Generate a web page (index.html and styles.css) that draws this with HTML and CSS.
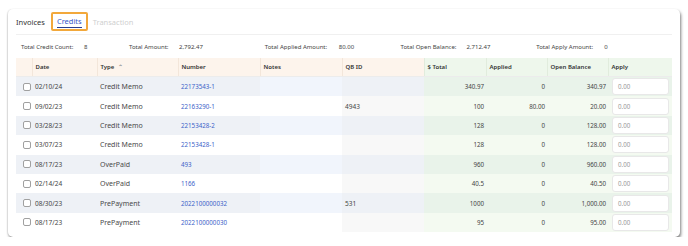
FILE: index.html
```html
<!DOCTYPE html>
<html lang="en">
  <head>
    <meta charset="UTF-8" />
    <meta name="viewport" content="width=device-width, initial-scale=1.0" />
    <title>Credits</title>
    <link rel="stylesheet" href="styles.css">
  </head>
  <body>
    <div class="card">
      <div class="tabs">
        <span class="tab">Invoices</span>
        <span class="tab active"><span class="tab-label">Credits</span></span>
        <span class="tab disabled">Transaction</span>
      </div>
      <div class="summary">
        <div class="stat"><span class="stat-label">Total Credit Count:</span><span class="stat-value">8</span></div>
        <div class="stat"><span class="stat-label">Total Amount:</span><span class="stat-value">2,792.47</span></div>
        <div class="stat"><span class="stat-label">Total Applied Amount:</span><span class="stat-value">80.00</span></div>
        <div class="stat"><span class="stat-label">Total Open Balance:</span><span class="stat-value">2,712.47</span></div>
        <div class="stat"><span class="stat-label">Total Apply Amount:</span><span class="stat-value">0</span></div>
      </div>
      <table class="grid">
        <colgroup>
          <col class="c-check" />
          <col class="c-date" />
          <col class="c-type" />
          <col class="c-num" />
          <col class="c-notes" />
          <col class="c-qb" />
          <col class="c-total" />
          <col class="c-applied" />
          <col class="c-open" />
          <col class="c-apply" />
        </colgroup>
        <thead>
          <tr>
            <th></th>
            <th>Date</th>
            <th>Type <span class="sort">&#8963;</span></th>
            <th>Number</th>
            <th>Notes</th>
            <th>QB ID</th>
            <th class="money">$ Total</th>
            <th class="money">Applied</th>
            <th class="money">Open Balance</th>
            <th class="money">Apply</th>
          </tr>
        </thead>
        <tbody>
          <tr>
            <td><span class="box"></span></td><td>02/10/24</td><td class="type">Credit Memo</td><td class="link">22173543-1</td><td class="notes"></td><td class="qb"></td>
            <td class="num money">340.97</td><td class="num money">0</td><td class="num money">340.97</td><td class="money"><div class="apply">0.00</div></td>
          </tr>
          <tr>
            <td><span class="box"></span></td><td>09/02/23</td><td class="type">Credit Memo</td><td class="link">22163290-1</td><td class="notes"></td><td class="qb">4943</td>
            <td class="num money">100</td><td class="num money">80.00</td><td class="num money">20.00</td><td class="money"><div class="apply">0.00</div></td>
          </tr>
          <tr>
            <td><span class="box"></span></td><td>03/28/23</td><td class="type">Credit Memo</td><td class="link">22153428-2</td><td class="notes"></td><td class="qb"></td>
            <td class="num money">128</td><td class="num money">0</td><td class="num money">128.00</td><td class="money"><div class="apply">0.00</div></td>
          </tr>
          <tr>
            <td><span class="box"></span></td><td>03/07/23</td><td class="type">Credit Memo</td><td class="link">22153428-1</td><td class="notes"></td><td class="qb"></td>
            <td class="num money">128</td><td class="num money">0</td><td class="num money">128.00</td><td class="money"><div class="apply">0.00</div></td>
          </tr>
          <tr>
            <td><span class="box"></span></td><td>08/17/23</td><td class="type">OverPaid</td><td class="link">493</td><td class="notes"></td><td class="qb"></td>
            <td class="num money">960</td><td class="num money">0</td><td class="num money">960.00</td><td class="money"><div class="apply">0.00</div></td>
          </tr>
          <tr>
            <td><span class="box"></span></td><td>02/14/24</td><td class="type">OverPaid</td><td class="link">1166</td><td class="notes"></td><td class="qb"></td>
            <td class="num money">40.5</td><td class="num money">0</td><td class="num money">40.50</td><td class="money"><div class="apply">0.00</div></td>
          </tr>
          <tr>
            <td><span class="box"></span></td><td>08/30/23</td><td class="type">PrePayment</td><td class="link">2022100000032</td><td class="notes"></td><td class="qb">531</td>
            <td class="num money">1000</td><td class="num money">0</td><td class="num money">1,000.00</td><td class="money"><div class="apply">0.00</div></td>
          </tr>
          <tr>
            <td><span class="box"></span></td><td>08/17/23</td><td class="type">PrePayment</td><td class="link">2022100000030</td><td class="notes"></td><td class="qb"></td>
            <td class="num money">95</td><td class="num money">0</td><td class="num money">95.00</td><td class="money"><div class="apply">0.00</div></td>
          </tr>
        </tbody>
      </table>
    </div>
  </body>
</html>
```

FILE: styles.css
```css
body {
  margin: 0;
  background: #fff;
  font-family: "Noto Sans", "Open Sans", sans-serif;
  color: #333;
}

.card {
  margin: 9px 0 0 8px;
  width: 672px;
  height: 228px;
  box-sizing: border-box;
  padding: 0 8px;
  background: #fff;
  border-radius: 5px;
  box-shadow: 1px 2px 3px rgba(0, 0, 0, 0.5), -1px 0 1px rgba(0, 0, 0, 0.08);
}

.tabs {
  display: flex;
  align-items: center;
  height: 25px;
  border-bottom: 1px solid #f0f0f0;
  font-size: 7.5px;
}

.tab {
  padding: 0 3px 0 0;
  margin-right: 3px;
  color: #333;
}

.tab.active {
  border: 2px solid #f2a83b;
  border-radius: 2px;
  padding: 2px 4px 3px;
  margin-right: 5px;
}

.tab-label {
  color: #3556c8;
  border-bottom: 1px solid #2a3f8f;
  padding-bottom: 1px;
}

.tab.disabled {
  color: #cfcfcf;
}

.summary {
  display: flex;
  height: 23px;
  align-items: center;
  padding-left: 5px;
  font-size: 6px;
  color: #444;
}

.stat {
  display: flex;
  width: 137px;
}

.stat:first-child { width: 109px; }

.stat:nth-child(1) .stat-label { width: 63px; }
.stat:nth-child(2) .stat-label { width: 50px; }
.stat:nth-child(3) .stat-label { width: 74px; }
.stat:nth-child(4) .stat-label { width: 66px; }
.stat:nth-child(5) .stat-label { width: 68px; }

.grid {
  width: 656px;
  table-layout: fixed;
  border-collapse: collapse;
  font-size: 6.5px;
}

.c-check { width: 16px; }
.c-date { width: 65px; }
.c-type { width: 81px; }
.c-num { width: 82px; }
.c-notes { width: 82px; }
.c-qb { width: 82px; }
.c-total { width: 62px; }
.c-applied { width: 61px; }
.c-open { width: 61px; }
.c-apply { width: 64px; }

.grid th {
  height: 18px;
  text-align: left;
  font-size: 6px;
  font-weight: 600;
  color: #333;
  background: #fdf4ec;
  padding: 0 3px;
  border-left: 1px solid #f3e6da;
  border-bottom: 1px solid #ececec;
}

.grid th:first-child {
  border-left: none;
}

.grid th.money {
  background: #eef7ec;
  border-left-color: #e1ecdd;
}

.sort {
  color: #999;
  font-size: 6px;
  margin-left: 2px;
}

.grid td {
  height: 19.4px;
  padding: 0 3px;
  white-space: nowrap;
  background: #fff;
  color: #444;
}

.grid td.type {
  font-size: 7px;
  color: #4a4a4a;
}

.grid tbody tr:nth-child(odd) td {
  background: #eef1f6;
}

.grid tbody tr:nth-child(odd) td.notes {
  background: #f1f5fc;
}

.grid tbody tr:nth-child(even) td.qb {
  background: #f8f8f8;
}

.grid td.money {
  background: #f4faf1;
}

.grid tbody tr:nth-child(odd) td.money {
  background: #e9f3ea;
}

.grid td.num {
  text-align: right;
  padding-right: 2px;
  font-size: 6.2px;
}

.grid td.link {
  color: #3c63c9;
  font-size: 6.2px;
}

.box {
  display: block;
  width: 6px;
  height: 6px;
  margin-left: 4px;
  border: 1px solid #a0a0a0;
  border-radius: 2px;
  background: #fff;
}

.apply {
  height: 15px;
  line-height: 15px;
  margin-left: 1px;
  padding-left: 5px;
  background: #fff;
  border: 1px solid #e8e8e8;
  border-radius: 3px;
  color: #999;
  font-size: 6.2px;
}
```
